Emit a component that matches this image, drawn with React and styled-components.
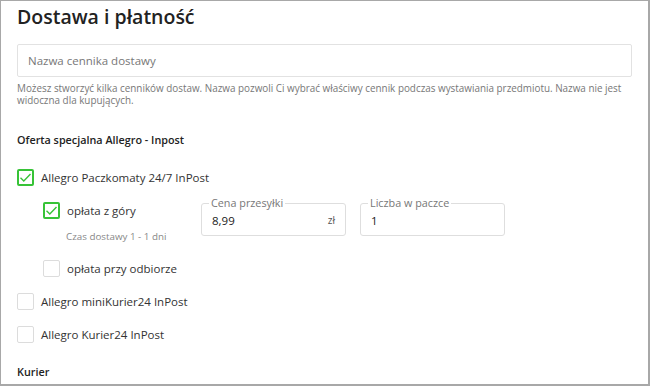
import styled, { createGlobalStyle } from "styled-components";

const GlobalStyle = createGlobalStyle`
  * { box-sizing: border-box; }
  body {
    margin: 0;
    font-family: "Open Sans", "Liberation Sans", sans-serif;
    color: #333;
    background: #fff;
  }
`;

const Frame = styled.div`
  width: 650px;
  height: 386px;
  border: 1px solid #a8a8a8;
  border-right-width: 2px;
  border-bottom-width: 2px;
  padding: 0 16px;
  overflow: hidden;
`;

const Title = styled.h1`
  margin: 0;
  padding-top: 2px;
  font-size: 19.5px;
  font-weight: 600;
  line-height: 28px;
  color: #222;
`;

const NameInput = styled.input`
  display: block;
  width: 100%;
  height: 33px;
  margin-top: 13px;
  padding: 0 10px;
  border: 1px solid #e2e2e2;
  border-radius: 2px;
  font-family: inherit;
  font-size: 11.5px;
  color: #333;
  outline: none;
  &::placeholder { color: #777; }
`;

const Hint = styled.p`
  margin: 5px 0 0;
  font-size: 9.9px;
  line-height: 12px;
  color: #777;
`;

const SectionTitle = styled.h2`
  margin: ${(p) => p.$top}px 0 0;
  font-size: 10.8px;
  font-weight: 600;
  line-height: 16px;
  color: #222;
`;

const Options = styled.div`
  display: flex;
  flex-direction: column;
  margin-top: ${(p) => p.$top || 0}px;
  padding-left: ${(p) => p.$indent || 0}px;
`;

const CheckRow = styled.label`
  display: flex;
  align-items: center;
  gap: 7px;
  height: 17px;
  font-size: 11.5px;
  color: #333;
  cursor: pointer;
`;

const Box = styled.span`
  display: flex;
  align-items: center;
  justify-content: center;
  width: 17px;
  height: 17px;
  flex: none;
  border: ${(p) => (p.$checked ? "2px solid #37c337" : "1px solid #dcdcdc")};
  border-radius: 2px;
  background: #fff;
`;

const SubOption = styled.div`
  display: flex;
  align-items: flex-start;
  margin-top: ${(p) => p.$top}px;
`;

const SubLeft = styled.div`
  width: 158px;
  display: flex;
  flex-direction: column;
`;

const Delivery = styled.div`
  margin: 11px 0 0 23px;
  font-size: 9.8px;
  line-height: 14px;
  color: #888;
`;

const Fields = styled.div`
  display: flex;
  gap: 14px;
  margin-top: -5px;
`;

const Field = styled.fieldset`
  width: 145px;
  height: 39px;
  margin: 0;
  padding: 0 10px 0 10px;
  border: 1px solid #dedede;
  border-radius: 3px;
  display: flex;
  align-items: center;
  justify-content: space-between;
`;

const Legend = styled.legend`
  padding: 0 2px;
  margin-left: -3px;
  font-size: 10.8px;
  line-height: 12px;
  color: #777;
`;

const FieldValue = styled.span`
  font-size: 11.5px;
  color: #222;
  margin-top: -4px;
`;

const Unit = styled.span`
  font-size: 10px;
  color: #555;
  margin-top: -4px;
`;

const Check = () => (
  <svg width="13" height="11" viewBox="0 0 13 11" fill="none">
    <path d="M1.5 5.8 L4.8 9 L11.5 2" stroke="#37c337" strokeWidth="1.4" />
  </svg>
);

const Checkbox = ({ checked, children }) => (
  <CheckRow>
    <Box $checked={checked}>{checked && <Check />}</Box>
    {children}
  </CheckRow>
);

export default function App() {
  return (
    <>
      <GlobalStyle />
      <Frame>
        <Title>Dostawa i płatność</Title>
        <NameInput placeholder="Nazwa cennika dostawy" />
        <Hint>
          Możesz stworzyć kilka cenników dostaw. Nazwa pozwoli Ci wybrać
          właściwy cennik podczas wystawiania przedmiotu. Nazwa nie jest
          widoczna dla kupujących.
        </Hint>

        <SectionTitle $top={26}>Oferta specjalna Allegro - Inpost</SectionTitle>

        <Options $top={21}>
          <Checkbox checked>Allegro Paczkomaty 24/7 InPost</Checkbox>
        </Options>

        <Options $indent={26}>
          <SubOption $top={16}>
            <SubLeft>
              <Checkbox checked>opłata z góry</Checkbox>
              <Delivery>Czas dostawy 1 - 1 dni</Delivery>
            </SubLeft>
            <Fields>
              <Field>
                <Legend>Cena przesyłki</Legend>
                <FieldValue>8,99</FieldValue>
                <Unit>zł</Unit>
              </Field>
              <Field>
                <Legend>Liczba w paczce</Legend>
                <FieldValue>1</FieldValue>
              </Field>
            </Fields>
          </SubOption>
          <SubOption $top={16}>
            <Checkbox>opłata przy odbiorze</Checkbox>
          </SubOption>
        </Options>

        <Options $top={16}>
          <Checkbox>Allegro miniKurier24 InPost</Checkbox>
        </Options>
        <Options $top={16}>
          <Checkbox>Allegro Kurier24 InPost</Checkbox>
        </Options>

        <SectionTitle $top={21}>Kurier</SectionTitle>
      </Frame>
    </>
  );
}
